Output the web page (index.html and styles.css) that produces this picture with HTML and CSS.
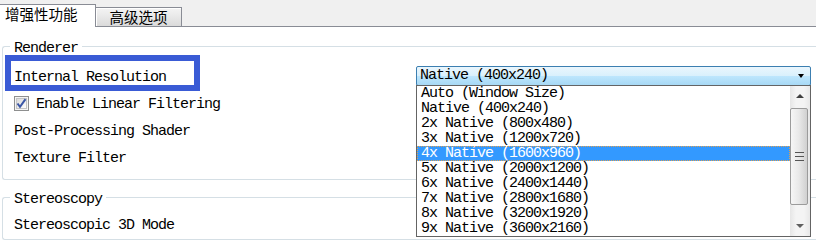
FILE: index.html
```html
<!DOCTYPE html>
<html lang="zh-cn">
<head>
    <meta charset="UTF-8">
    <title>增强性功能</title>
    <link rel="stylesheet" href="styles.css">
</head>
<body>
    <div class="tabs">
        <div class="tab active">增强性功能</div>
        <div class="tab">高级选项</div>
        <div class="tab-fill"></div>
    </div>

    <div class="pane">
        <div class="group renderer">
            <div class="group-title">Renderer</div>
            <div class="row marked">
                <span class="label">Internal Resolution</span>
                <div class="combo">
                    <span>Native (400x240)</span>
                    <span class="combo-arrow"></span>
                    <div class="combo-list">
                        <div class="options">
                            <div class="option">Auto (Window Size)</div>
                            <div class="option">Native (400x240)</div>
                            <div class="option">2x Native (800x480)</div>
                            <div class="option">3x Native (1200x720)</div>
                            <div class="option selected">4x Native (1600x960)</div>
                            <div class="option">5x Native (2000x1200)</div>
                            <div class="option">6x Native (2400x1440)</div>
                            <div class="option">7x Native (2800x1680)</div>
                            <div class="option">8x Native (3200x1920)</div>
                            <div class="option">9x Native (3600x2160)</div>
                        </div>
                        <div class="scrollbar">
                            <div class="sb-btn"><span class="arrow-up"></span></div>
                            <div class="sb-track">
                                <div class="sb-thumb"><div class="grip"></div></div>
                            </div>
                            <div class="sb-btn"><span class="arrow-down"></span></div>
                        </div>
                    </div>
                </div>
            </div>
            <div class="row">
                <svg class="checkbox" width="15" height="15" viewBox="0 0 15 15">
                    <defs>
                        <linearGradient id="cbfill" x1="0" y1="0" x2="1" y2="1">
                            <stop offset="0" stop-color="#d8d8d8"/>
                            <stop offset="1" stop-color="#ffffff"/>
                        </linearGradient>
                    </defs>
                    <rect x="0.5" y="0.5" width="14" height="14" fill="#f4f4f4" stroke="#8e8f8f"/>
                    <rect x="2.5" y="2.5" width="10" height="10" fill="url(#cbfill)" stroke="#c4c4c4"/>
                    <path d="M3.5 7.5 L6 10.8 L11.5 3.2" fill="none" stroke="#3a56a6" stroke-width="2"/>
                </svg>
                <span class="label">Enable Linear Filtering</span>
            </div>
            <div class="row">
                <span class="label">Post-Processing Shader</span>
            </div>
            <div class="row">
                <span class="label">Texture Filter</span>
            </div>
        </div>

        <div class="group stereo">
            <div class="group-title">Stereoscopy</div>
            <div class="row">
                <span class="label">Stereoscopic 3D Mode</span>
            </div>
        </div>
    </div>
</body>
</html>
```

FILE: styles.css
```css
body {
    margin: 0;
    background-color: #fff;
    color: #000;
    font-family: "Liberation Mono", "Courier New", "DejaVu Sans Mono", monospace;
    font-size: 15px;
    letter-spacing: -1px;
    overflow: hidden;
}
.tabs {
    display: flex;
    align-items: flex-end;
    height: 27px;
    background-color: #f0f0f0;
    font-family: "Noto Sans CJK SC", sans-serif;
    font-size: 14.5px;
    letter-spacing: 0;
}
.tab {
    box-sizing: border-box;
    border-top: 1px solid #898c95;
    border-right: 1px solid #898c95;
    border-bottom: 1px solid #898c95;
    width: 86px;
    height: 20px;
    line-height: 18px;
    text-align: center;
    background: linear-gradient(#f4f4f4, #e8e8e8 50%, #dadada);
    box-shadow: inset 1px 1px 0 #fff;
}
.tab.active {
    width: 96px;
    height: 23px;
    line-height: 18px;
    padding-left: 5px;
    text-align: left;
    border-bottom: none;
    background: #fff;
    box-shadow: none;
}
.tab-fill {
    flex: 1;
    border-bottom: 1px solid #898c95;
}
.pane {
    padding-left: 2px;
}
.group {
    border: 1px solid #d5dfe5;
    border-right: none;
    border-radius: 3px 0 0 3px;
}
.renderer {
    margin-top: 19px;
    padding: 9px 0 7px;
}
.stereo {
    margin-top: 17px;
    padding-top: 6px;
}
.group-title {
    width: fit-content;
    margin: -15px 0 0 7px;
    padding: 0 4px;
    line-height: 16px;
    background: #fff;
}
.renderer .group-title {
    margin-bottom: 7px;
}
.stereo .group-title {
    margin-top: -12px;
    margin-bottom: 4px;
}
.row {
    display: flex;
    align-items: center;
    height: 27px;
    padding-left: 11px;
}
.marked {
    position: relative;
}
.marked .label {
    width: 402px;
}
.marked::before {
    content: "";
    position: absolute;
    left: 2px;
    top: -9px;
    width: 195px;
    height: 36px;
    box-sizing: border-box;
    border: 6px solid #3a5bd5;
}
.checkbox {
    margin: -2px 7px 0 0;
}
.combo {
    position: relative;
    box-sizing: border-box;
    width: 395px;
    height: 20px;
    margin-top: -4px;
    padding: 0 6px 0 3px;
    display: flex;
    align-items: center;
    justify-content: space-between;
    border: 1px solid #3c7fb1;
    border-radius: 2px;
    background: linear-gradient(#eaf6fd, #d9f0fc 50%, #bee6fd 50%, #a7d9f5);
    line-height: 18px;
}
.combo-arrow {
    width: 0;
    height: 0;
    border-left: 3.5px solid transparent;
    border-right: 3.5px solid transparent;
    border-top: 4px solid #000;
}
.combo-list {
    position: absolute;
    left: -1px;
    top: 18px;
    width: 395px;
    box-sizing: border-box;
    display: flex;
    border: 1px solid #646464;
    background: #fff;
}
.options {
    flex: 1;
}
.option {
    height: 15px;
    line-height: 15px;
    padding-left: 4px;
}
.option.selected {
    background: #3399ff;
    color: #fff;
    outline: 1px dotted #e0a050;
    outline-offset: -1px;
}
.scrollbar {
    width: 20px;
    display: flex;
    flex-direction: column;
    background: linear-gradient(90deg, #e6e6e6, #f4f4f4 30%, #f4f4f4 70%, #e8e8e8);
}
.sb-btn {
    height: 20px;
    display: flex;
    align-items: center;
    justify-content: center;
}
.arrow-up {
    border-left: 4px solid transparent;
    border-right: 4px solid transparent;
    border-bottom: 4px solid #404040;
}
.arrow-down {
    border-left: 4px solid transparent;
    border-right: 4px solid transparent;
    border-top: 4px solid #606060;
}
.sb-track {
    flex: 1;
    padding-top: 2px;
}
.sb-thumb {
    box-sizing: border-box;
    width: 18px;
    height: 97px;
    display: flex;
    align-items: center;
    justify-content: center;
    border: 1px solid #9b9b9b;
    border-radius: 2px;
    background: linear-gradient(90deg, #f6f6f6, #e8e8e8 50%, #d0d0d0);
}
.grip {
    width: 9px;
    height: 9px;
    background: linear-gradient(#555 0 1px, transparent 1px 4px, #555 4px 5px, transparent 5px 8px, #555 8px 9px);
}
```
